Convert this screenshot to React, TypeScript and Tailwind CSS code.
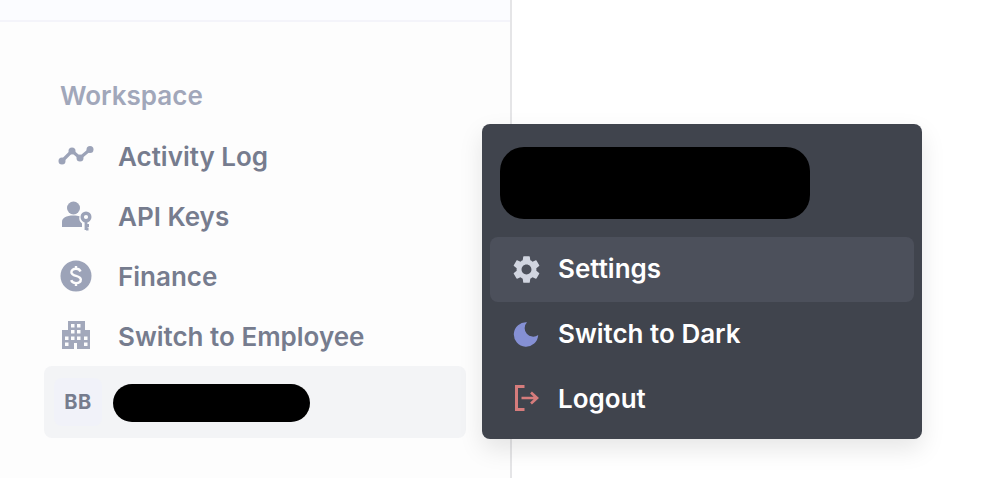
import { MdSettings } from "react-icons/md";

const font = "font-['Inter',sans-serif]";

function ActivityIcon() {
  return (
    <svg width="36" height="24" viewBox="0 0 36 24" fill="none" className="text-[#9ca3b8]">
      <path d="M4 17 L14 7 L22 14 L32 5.500" stroke="currentColor" strokeWidth="3.200" />
      <circle cx="4" cy="17" r="3.500" fill="currentColor" />
      <circle cx="14" cy="7" r="3.500" fill="currentColor" />
      <circle cx="22" cy="14" r="3.500" fill="currentColor" />
      <circle cx="32" cy="5.500" r="3.500" fill="currentColor" />
    </svg>
  );
}

function UserKeyIcon() {
  return (
    <svg width="32" height="30" viewBox="0 0 32 30" fill="none" className="text-[#9ca3b8]">
      <circle cx="13.500" cy="7" r="6.500" fill="currentColor" />
      <path d="M2 26v-5c0-4 4-6.500 11.500-6.500 2.500 0 4.500.3 6 .8-.8 3 .3 5.700 2.500 7.200v3.500z" fill="currentColor" />
      <circle cx="26" cy="16" r="3.800" stroke="currentColor" strokeWidth="3.400" />
      <path d="M26 20v9M26 24.500h3M26 28h2.500" stroke="currentColor" strokeWidth="2.800" />
    </svg>
  );
}

function DollarIcon() {
  return (
    <svg width="32" height="32" viewBox="0 0 32 32" fill="none" className="text-[#9ca3b8]">
      <circle cx="16" cy="16" r="15.500" fill="currentColor" />
      <path
        d="M20.500 11.500c-.6-1.600-2.300-2.700-4.500-2.700-2.700 0-4.600 1.400-4.600 3.400 0 4.700 9.400 2.500 9.400 7.400 0 2.100-2 3.500-4.800 3.500-2.400 0-4.200-1.100-4.800-2.900M16 6v2.800M16 23v3"
        stroke="#fdfdfd"
        strokeWidth="2.400"
      />
    </svg>
  );
}

function BuildingIcon() {
  return (
    <svg width="30" height="30" viewBox="0 0 30 30" className="text-[#a2a8bb]">
      <path
        fill="currentColor"
        fillRule="evenodd"
        d="M7 0h17v9h5v19H16v-6h-3v6H1V9h6zM10 3v3.500h3.500V3zM16 3v3.500h3.500V3zM10 9v3.500h3.500V9zM16 9v3.500h3.500V9zM4 15.500V19h3.500v-3.500zM10 15.500V19h3.500v-3.500zM16 15.500V19h3.500v-3.500zM23 15.500V19h3.500v-3.500zM4 21.500V25h3.500v-3.500zM23 21.500V25h3.500v-3.500z"
      />
    </svg>
  );
}

function MoonIcon() {
  return (
    <svg width="26" height="26" viewBox="0 0 26 26" className="text-[#8590d4]">
      <path fill="currentColor" d="M14 1.300A12.200 12.200 0 1 0 25.200 14 8.500 8.500 0 0 1 14 1.300z" />
    </svg>
  );
}

function LogoutIcon() {
  return (
    <svg width="26" height="26" viewBox="0 0 26 26" fill="none" className="text-[#d67c7c]">
      <path d="M11.500 1.500H3.500v23h8" stroke="currentColor" strokeWidth="3" />
      <path d="M8.500 13h15M18 7.500l6 5.500-6 5.500" stroke="currentColor" strokeWidth="2.700" />
    </svg>
  );
}

const navItems = [
  { label: "Activity Log", icon: <ActivityIcon /> },
  { label: "API Keys", icon: <UserKeyIcon /> },
  { label: "Finance", icon: <DollarIcon /> },
  { label: "Switch to Employee", icon: <BuildingIcon /> },
];

function Sidebar() {
  return (
    <aside className="w-[512px] h-[478px] flex flex-col bg-[#fdfdfd] border-r-2 border-[#e5e5e7]">
      <div className="h-[22px] shrink-0 bg-[#fbfcff] border-b-2 border-[#f4f4fa]" />
      <div className="flex flex-col px-[44px] pt-[56px]">
        <p className="pl-[16px] h-[36px] leading-[36px] text-[26px] font-semibold text-[#a1a7ba]">Workspace</p>
        <nav className="flex flex-col mt-[12px]">
          {navItems.map((item) => (
            <div key={item.label} className="flex items-center h-[60px] pl-[14px]">
              <span className="w-[36px] flex justify-center">{item.icon}</span>
              <span className="ml-[24px] text-[26px] font-semibold text-[#767c8e]">{item.label}</span>
            </div>
          ))}
        </nav>
        <div className="flex items-center gap-[11px] h-[72px] w-[422px] pl-[10px] rounded-lg bg-[#f3f4f6]">
          <div className="w-[48px] h-[48px] flex items-center justify-center rounded-lg bg-[#f1f2f9] text-[20px] font-bold tracking-wide text-[#767c8e]">
            BB
          </div>
          <div className="w-[197px] h-[38px] mt-[2px] rounded-full bg-black" />
        </div>
      </div>
    </aside>
  );
}

function UserMenu() {
  return (
    <div className="absolute left-[482px] top-[124px] w-[440px] h-[315px] rounded-lg bg-[#40444d] px-[8px] pt-[23px] shadow-[0_10px_25px_rgba(0,0,0,0.1)]">
      <div className="ml-[10px] w-[310px] h-[72px] rounded-[24px] bg-black" />
      <div className="mt-[18px] flex items-center h-[65px] rounded-lg bg-[#4c505b] pl-[20px]">
        <MdSettings size={33} className="text-[#d1d5e0]" />
        <span className="ml-[15px] mb-[2px] text-[26px] font-semibold text-white">Settings</span>
      </div>
      <div className="flex items-center h-[64px] pl-[23px]">
        <MoonIcon />
        <span className="ml-[19px] mb-[2px] text-[26px] font-semibold text-white">Switch to Dark</span>
      </div>
      <div className="flex items-center h-[64px] pl-[23px]">
        <LogoutIcon />
        <span className="ml-[19px] text-[26px] font-semibold text-white">Logout</span>
      </div>
    </div>
  );
}

export default function App() {
  return (
    <div className={`relative w-[982px] h-[478px] overflow-hidden bg-white ${font}`}>
      <Sidebar />
      <UserMenu />
    </div>
  );
}
